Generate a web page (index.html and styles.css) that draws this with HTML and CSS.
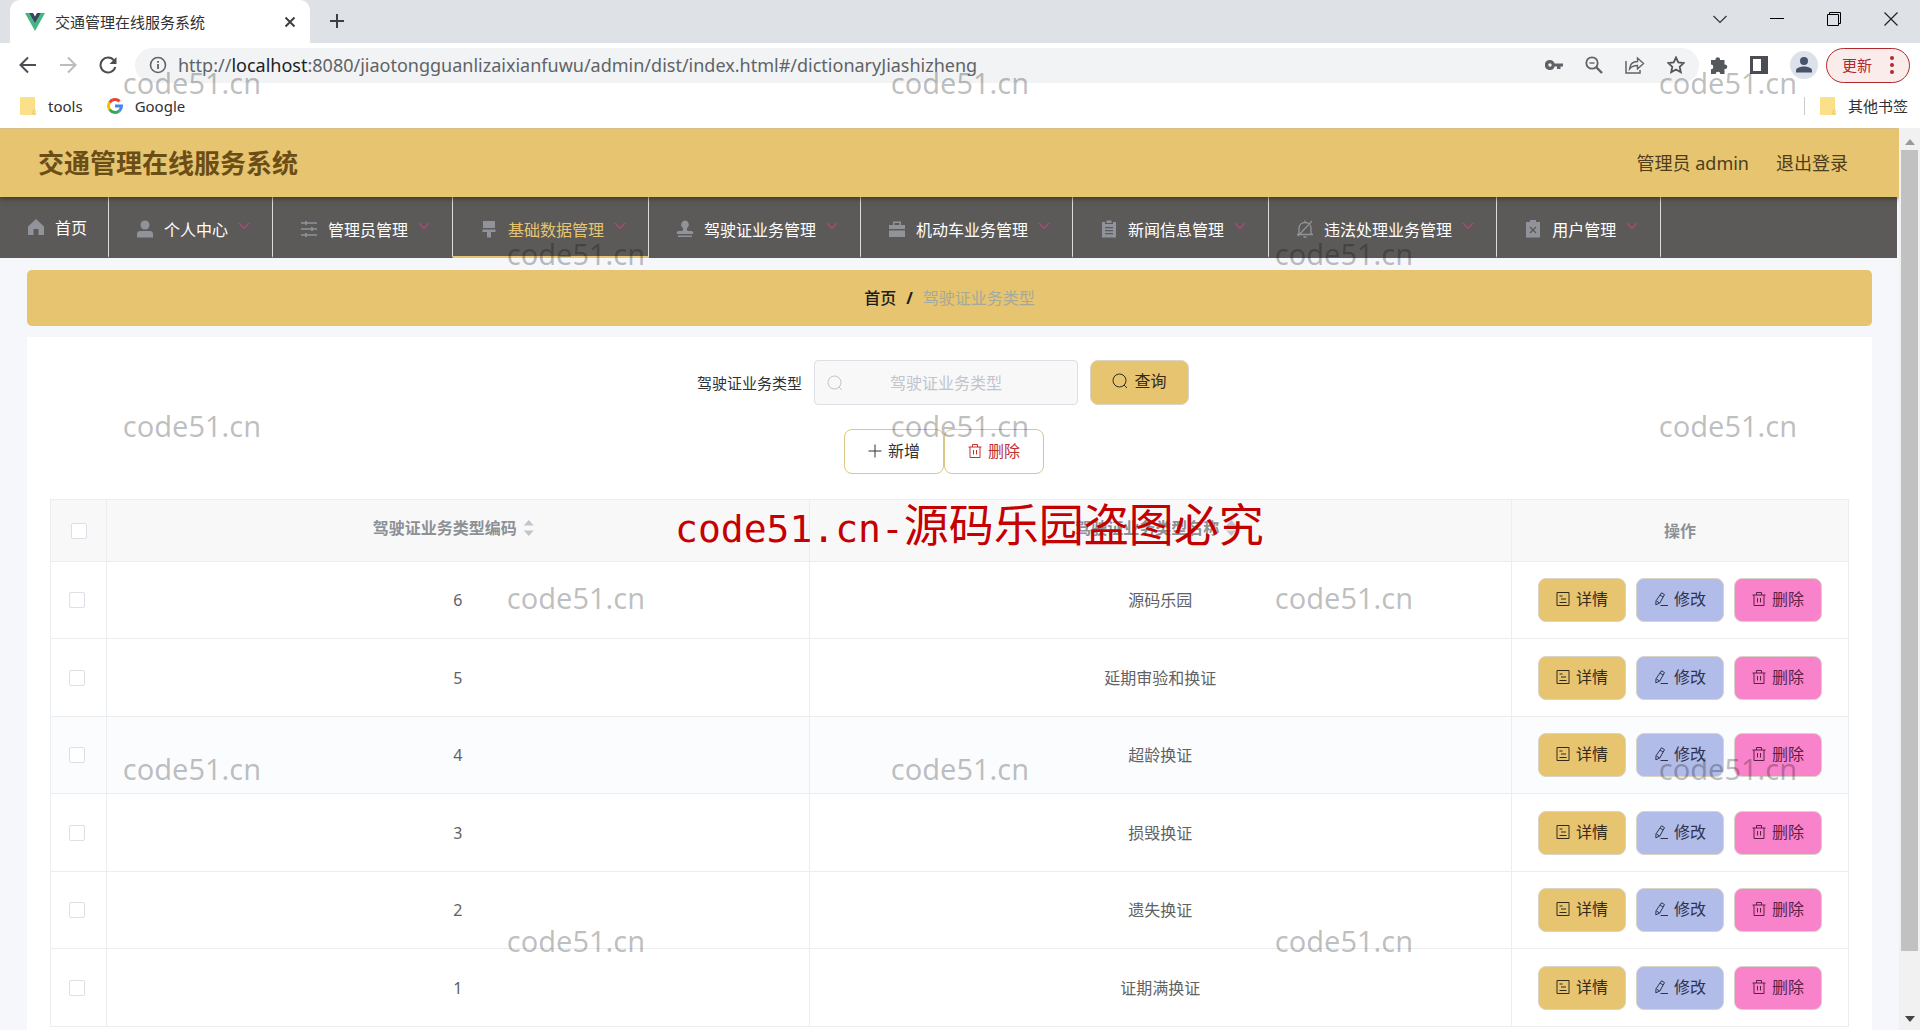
FILE: index.html
```html
<!DOCTYPE html>
<html lang="zh-CN">
<head>
<meta charset="utf-8">
<title>交通管理在线服务系统</title>
<link rel="stylesheet" href="styles.css">
</head>
<body>
<svg class="sprite" aria-hidden="true">
  <symbol id="i-doc" viewBox="0 0 14 14"><path d="M1 .5h12v13H1zM3.500 4h3M5 7h5M3.500 10.500h7" fill="none" stroke="currentColor"/></symbol>
  <symbol id="i-edit" viewBox="0 0 14 14"><path d="M7.500 .8l3 1.800L5.800 11 1.800 12.800 2 8.800zM6 3l3 2M2.500 9l3 2M6.500 13.500H14" fill="none" stroke="currentColor"/></symbol>
  <symbol id="i-trash" viewBox="0 0 14 14"><path d="M.5 3h13M4.500 3V.5h5V3M2 3v10.500h10V3M5.500 6v4.500M8.500 6v4.500" fill="none" stroke="currentColor"/></symbol>
  <symbol id="i-search" viewBox="0 0 16 16"><circle cx="7.500" cy="7.500" r="6.500" fill="none" stroke="currentColor"/><path d="M12 12l3 3" stroke="currentColor"/></symbol>
  <symbol id="i-plus" viewBox="0 0 14 14"><path d="M7 .5v13M.5 7h13" stroke="currentColor"/></symbol>
  <symbol id="i-down" viewBox="0 0 12 8"><path d="M1 1l5 5.500L11 1" fill="none" stroke="currentColor" stroke-width="1.400"/></symbol>
  <symbol id="i-folder" viewBox="0 0 16 18"><path d="M1 0h13a1 1 0 0 1 1 1v11l1 2v3a1 1 0 0 1-1 1H1a1 1 0 0 1-1-1V1a1 1 0 0 1 1-1z" fill="#fbe08a"/><path d="M15 12l-2 2v3h2.500" fill="none" stroke="#ecc65c"/></symbol>
</svg>

<div class="tabs">
  <div class="tab">
    <svg width="20" height="18" viewBox="0 0 20 18"><path d="M0 0h4l6 10.500L16 0h4L10 18z" fill="#41b883"/><path d="M4 0h4l2 3.500L12 0h4l-6 10.500z" fill="#34495e"/></svg>
    <span class="tab-title">交通管理在线服务系统</span>
    <button class="plain" aria-label="关闭标签"><svg width="12" height="12" viewBox="0 0 12 12"><path d="M1.500 1.500l9 9M10.500 1.500l-9 9" stroke="#3c4043" stroke-width="2"/></svg></button>
  </div>
  <button class="plain new-tab" aria-label="新标签页"><svg width="16" height="16" viewBox="0 0 16 16"><path d="M8 1v14M1 8h14" stroke="#3c4043" stroke-width="2"/></svg></button>
  <div class="window-controls">
    <button class="plain" aria-label="搜索标签页"><svg width="14" height="14" viewBox="0 0 14 14"><path d="M.5 4L7 10.500 13.500 4" fill="none" stroke="#333" stroke-width="1.200"/></svg></button>
    <button class="plain" aria-label="最小化"><svg width="14" height="14" viewBox="0 0 14 14"><path d="M0 6.500h14" stroke="#000"/></svg></button>
    <button class="plain" aria-label="还原"><svg width="14" height="14" viewBox="0 0 14 14"><path d="M.5 2.500h11v11H.5zM2.500 2V.5h11v11H12" fill="none" stroke="#000"/></svg></button>
    <button class="plain" aria-label="关闭"><svg width="14" height="14" viewBox="0 0 14 14"><path d="M.5.5l13 13M13.500.5l-13 13" stroke="#222" stroke-width="1.200"/></svg></button>
  </div>
</div>

<div class="toolbar">
  <div class="history">
    <button class="plain" aria-label="后退"><svg width="18" height="18" viewBox="0 0 18 18"><path d="M17 9H2M9 1.500L1.500 9 9 16.500" fill="none" stroke="#4a4d51" stroke-width="2"/></svg></button>
    <button class="plain" aria-label="前进"><svg width="18" height="18" viewBox="0 0 18 18"><path d="M1 9h15M9 1.500L16.500 9 9 16.500" fill="none" stroke="#babcbe" stroke-width="2"/></svg></button>
    <button class="plain" aria-label="刷新"><svg width="18" height="18" viewBox="0 0 18 18"><path d="M15 4.500A7.500 7.500 0 1 0 16.300 11" fill="none" stroke="#4a4d51" stroke-width="2"/><path d="M17.500 1v7h-7z" fill="#4a4d51"/></svg></button>
  </div>
  <div class="omnibox">
    <svg width="18" height="18" viewBox="0 0 18 18"><circle cx="9" cy="9" r="7.500" fill="none" stroke="#5f6368" stroke-width="1.600"/><path d="M9 8v5M9 5v1.800" stroke="#5f6368" stroke-width="1.800"/></svg>
    <span class="url">http://<span class="host">localhost</span>:8080/jiaotongguanlizaixianfuwu/admin/dist/index.html#/dictionaryJiashizheng</span>
    <div class="omni-icons">
      <svg width="18" height="18" viewBox="0 0 18 18"><path d="M5 4a5 5 0 1 0 4.600 6.500H12V13h3.500v-2.500H18v-3H9.600A5 5 0 0 0 5 4zm0 3.300a1.700 1.700 0 1 1 0 3.400 1.700 1.700 0 0 1 0-3.400z" fill="#5f6368"/></svg>
      <svg width="18" height="18" viewBox="0 0 18 18"><circle cx="7" cy="7" r="5.700" fill="none" stroke="#5f6368" stroke-width="1.800"/><path d="M4.500 7h5" stroke="#5f6368" stroke-width="1.400"/><path d="M11 11l6 6" stroke="#5f6368" stroke-width="2.400"/></svg>
      <svg width="20" height="18" viewBox="0 0 20 18"><path d="M1 5v12h14v-3" fill="none" stroke="#5f6368" stroke-width="1.500"/><path d="M4.500 13c.5-5 3-7.500 8-7.500V2l6 5.500-6 5.500V9.500c-4 0-6 1-8 3.500z" fill="none" stroke="#5f6368" stroke-width="1.400"/></svg>
      <svg width="18" height="18" viewBox="0 0 18 18"><path d="M9 1.500l2.300 5 5.400.6-4 3.700 1.100 5.400L9 13.500l-4.800 2.700 1.100-5.400-4-3.700 5.400-.6z" fill="none" stroke="#54585c" stroke-width="1.800"/></svg>
    </div>
  </div>
  <div class="actions">
    <svg width="18" height="18" viewBox="0 0 18 18"><path d="M1 4h4.500a2.300 2.300 0 1 1 4.500 0h4.500v4.500a2.300 2.300 0 1 1 0 4.500V18H10.300a2.300 2.300 0 0 0-4.600 0H1v-4.800a2.300 2.300 0 0 0 0-4.600z" fill="#54585c"/></svg>
    <svg width="18" height="18" viewBox="0 0 18 18"><path d="M0 0h18v18H0zM3 3v12h8V3z" fill="#4a4d51" fill-rule="evenodd"/></svg>
    <svg width="28" height="28" viewBox="0 0 28 28"><circle cx="14" cy="14" r="14" fill="#dde1e9"/><circle cx="14" cy="10" r="4" fill="#47536b"/><path d="M6 21.500v-2c0-3 5-4 8-4s8 1 8 4v2z" fill="#47536b"/></svg>
    <button class="update">更新<svg width="4" height="18" viewBox="0 0 4 18"><g fill="#b3282d"><circle cx="2" cy="2" r="2"/><circle cx="2" cy="9" r="2"/><circle cx="2" cy="16" r="2"/></g></svg></button>
  </div>
</div>

<div class="bookmarks">
  <a href="#"><svg width="16" height="18"><use href="#i-folder"/></svg>tools</a>
  <a href="#"><svg width="16" height="16" viewBox="0 0 16 16"><g fill="none" stroke-width="3"><path d="M2.600 4.500A6.500 6.500 0 0 1 12.600 3.400" stroke="#ea4335"/><path d="M2.600 11.500a6.500 6.500 0 0 1 0-7" stroke="#fbbc05"/><path d="M12.300 12.800A6.500 6.500 0 0 1 2.600 11.500" stroke="#34a853"/><path d="M8 8h6.500a6.500 6.500 0 0 1-2.200 4.800" stroke="#4285f4"/></g></svg>Google</a>
  <a href="#" class="other"><svg width="16" height="18"><use href="#i-folder"/></svg>其他书签</a>
</div>

<div class="viewport">
  <div class="app">
    <header class="header">
      <h1>交通管理在线服务系统</h1>
      <div class="account"><span>管理员 admin</span><a href="#">退出登录</a></div>
    </header>
    <nav class="nav">
      <a href="#" class="home"><svg width="18" height="18" viewBox="0 0 18 18"><path d="M9 1L1 8.500V17h5.500v-6h5v6H17V8.500z" fill="currentColor"/></svg>首页</a>
      <a href="#"><svg width="18" height="18" viewBox="0 0 18 18"><circle cx="9" cy="5" r="4.500" fill="currentColor"/><path d="M1 17.500V14c0-2 1.500-3 3-3h10c1.500 0 3 1 3 3v3.500z" fill="currentColor"/></svg>个人中心<svg class="down"><use href="#i-down"/></svg></a>
      <a href="#"><svg width="18" height="18" viewBox="0 0 18 18"><path d="M1 3h16M1 9h16M1 15h16M6 1v4M12 7v4M6 13v4" fill="none" stroke="currentColor" stroke-width="1.600"/></svg>管理员管理<svg class="down"><use href="#i-down"/></svg></a>
      <a href="#" class="active"><svg width="18" height="18" viewBox="0 0 18 18"><path d="M3 1h12v7H3zM2.500 9.500h13V12H11v5.500H7V12H2.500z" fill="currentColor"/></svg>基础数据管理<svg class="down"><use href="#i-down"/></svg></a>
      <a href="#"><svg width="18" height="18" viewBox="0 0 18 18"><path d="M9 .5a4 4 0 0 0-2.500 7c1 1 .8 3-.5 3.500H3a2 2 0 0 0-2 3h16a2 2 0 0 0-2-3h-3c-1.300-.5-1.500-2.500-.5-3.500A4 4 0 0 0 9 .5zM2 15.500h14v1.500H2z" fill="currentColor"/></svg>驾驶证业务管理<svg class="down"><use href="#i-down"/></svg></a>
      <a href="#"><svg width="18" height="18" viewBox="0 0 18 18"><path d="M5 5V1.500h8V5h4v4H1V5zm1.500 0h5V3h-5zM1 10.500h16V17H1z" fill="currentColor" fill-rule="evenodd"/></svg>机动车业务管理<svg class="down"><use href="#i-down"/></svg></a>
      <a href="#"><svg width="18" height="18" viewBox="0 0 18 18"><path d="M2 2h3v2h8V2h3v15.500H2zM6.500.5h5v2.500h-5zM5 7v1.300h8V7zM5 10v1.300h8V10zM5 13v1.300h8V13z" fill="currentColor" fill-rule="evenodd"/></svg>新闻信息管理<svg class="down"><use href="#i-down"/></svg></a>
      <a href="#"><svg width="18" height="18" viewBox="0 0 18 18"><path d="M3 14.500V8.500C3 5 5.500 2.500 9 2.500s6 2.500 6 6v6M1 14.500h16M9 .5v2M7.500 17h3M16 1L2 16" fill="none" stroke="currentColor" stroke-width="1.300"/></svg>违法处理业务管理<svg class="down"><use href="#i-down"/></svg></a>
      <a href="#"><svg width="18" height="18" viewBox="0 0 18 18"><path d="M2 2h14v15.500H2zM6 0h6v2H6z" fill="currentColor"/><path d="M6 7l6 6M12 7l-6 6" stroke="#5c5a58" stroke-width="1.400"/></svg>用户管理<svg class="down"><use href="#i-down"/></svg></a>
    </nav>
    <main class="main">
      <div class="crumbs"><a href="#">首页</a><span class="slash">/</span><span class="current">驾驶证业务类型</span></div>
      <section class="card">
        <form class="search">
          <label for="type">驾驶证业务类型</label>
          <div class="field"><svg width="16" height="16"><use href="#i-search"/></svg><input id="type" type="text" placeholder="驾驶证业务类型"></div>
          <button type="button" class="btn query"><svg width="16" height="16"><use href="#i-search"/></svg>查询</button>
        </form>
        <div class="batch">
          <button class="btn outline"><svg width="14" height="14"><use href="#i-plus"/></svg>新增</button>
          <button class="btn outline danger"><svg width="14" height="14"><use href="#i-trash"/></svg>删除</button>
        </div>
        <table>
          <colgroup><col class="c-check"><col><col><col class="c-ops"></colgroup>
          <thead><tr>
            <th><input type="checkbox" aria-label="全选"></th>
            <th><span class="sort">驾驶证业务类型编码<i></i></span></th>
            <th><span class="sort">驾驶证业务类型名称<i></i></span></th>
            <th>操作</th>
          </tr></thead>
          <tbody>
            <tr><td><input type="checkbox" aria-label="选择 6"></td><td>6</td><td>源码乐园</td><td><div class="ops"><button class="btn query"><svg><use href="#i-doc"/></svg>详情</button><button class="btn edit"><svg><use href="#i-edit"/></svg>修改</button><button class="btn remove"><svg><use href="#i-trash"/></svg>删除</button></div></td></tr>
            <tr><td><input type="checkbox" aria-label="选择 5"></td><td>5</td><td>延期审验和换证</td><td><div class="ops"><button class="btn query"><svg><use href="#i-doc"/></svg>详情</button><button class="btn edit"><svg><use href="#i-edit"/></svg>修改</button><button class="btn remove"><svg><use href="#i-trash"/></svg>删除</button></div></td></tr>
            <tr class="hover"><td><input type="checkbox" aria-label="选择 4"></td><td>4</td><td>超龄换证</td><td><div class="ops"><button class="btn query"><svg><use href="#i-doc"/></svg>详情</button><button class="btn edit"><svg><use href="#i-edit"/></svg>修改</button><button class="btn remove"><svg><use href="#i-trash"/></svg>删除</button></div></td></tr>
            <tr><td><input type="checkbox" aria-label="选择 3"></td><td>3</td><td>损毁换证</td><td><div class="ops"><button class="btn query"><svg><use href="#i-doc"/></svg>详情</button><button class="btn edit"><svg><use href="#i-edit"/></svg>修改</button><button class="btn remove"><svg><use href="#i-trash"/></svg>删除</button></div></td></tr>
            <tr><td><input type="checkbox" aria-label="选择 2"></td><td>2</td><td>遗失换证</td><td><div class="ops"><button class="btn query"><svg><use href="#i-doc"/></svg>详情</button><button class="btn edit"><svg><use href="#i-edit"/></svg>修改</button><button class="btn remove"><svg><use href="#i-trash"/></svg>删除</button></div></td></tr>
            <tr><td><input type="checkbox" aria-label="选择 1"></td><td>1</td><td>证期满换证</td><td><div class="ops"><button class="btn query"><svg><use href="#i-doc"/></svg>详情</button><button class="btn edit"><svg><use href="#i-edit"/></svg>修改</button><button class="btn remove"><svg><use href="#i-trash"/></svg>删除</button></div></td></tr>
          </tbody>
        </table>
      </section>
    </main>
  </div>
  <div class="scrollbar">
    <svg width="10" height="6" viewBox="0 0 10 6"><path d="M5 0l5 6H0z" fill="#9a9a9a"/></svg>
    <div class="track"><div class="thumb"></div></div>
    <svg width="10" height="6" viewBox="0 0 10 6"><path d="M0 0h10L5 6z" fill="#444"/></svg>
  </div>
</div>

<div class="marks">
  <span>code51.cn</span><span>code51.cn</span><span>code51.cn</span>
  <span>code51.cn</span><span>code51.cn</span>
  <span>code51.cn</span><span>code51.cn</span><span>code51.cn</span>
  <span>code51.cn</span><span>code51.cn</span>
  <span>code51.cn</span><span>code51.cn</span><span>code51.cn</span>
  <span>code51.cn</span><span>code51.cn</span>
</div>
<div class="notice"><span class="latin">code51.cn-</span>源码乐园盗图必究</div>
</body>
</html>
```
FILE: styles.css
```css
* { box-sizing: border-box; }

body {
  margin: 0;
  height: 100vh;
  overflow: hidden;
  position: relative;
  display: flex;
  flex-direction: column;
  background: #fff;
  color: #303133;
  font: 16px/24px "Noto Sans", "Noto Sans CJK SC", sans-serif;
}

a { color: inherit; text-decoration: none; }
svg { display: block; flex: none; }
button, input { font: inherit; color: inherit; }
.sprite { position: absolute; width: 0; height: 0; }

.plain {
  display: flex;
  padding: 0;
  border: 0;
  background: none;
}

/* Browser chrome */
.tabs {
  display: flex;
  height: 43px;
  padding-left: 10px;
  background: #dee1e6;
}
.tab {
  display: flex;
  align-items: center;
  width: 300px;
  padding: 0 14px 0 15px;
  background: #fff;
  border-radius: 10px 10px 0 0;
}
.tab-title { flex: 1; margin-left: 10px; font-size: 15px; }
.new-tab { margin: 13px 0 0 19px; }
.window-controls {
  display: flex;
  gap: 43px;
  margin-left: auto;
  padding: 12px 22px 0 0;
}

.toolbar {
  display: flex;
  align-items: center;
  height: 44px;
  padding-right: 10px;
}
.history { display: flex; gap: 22px; width: 135px; padding-left: 19px; }
.omnibox {
  display: flex;
  flex: 1;
  align-items: center;
  height: 35px;
  padding: 0 14px;
  background: #f1f3f4;
  border-radius: 18px;
}
.url { flex: 1; margin-left: 11px; font-size: 18px; color: #5f6368; }
.host { color: #202124; }
.omni-icons { display: flex; gap: 22px; }
.actions { display: flex; align-items: center; gap: 22px; margin-left: 17px; }
.update {
  display: flex;
  align-items: center;
  justify-content: space-between;
  width: 84px;
  height: 35px;
  margin-left: -14px;
  padding: 0 15px;
  border: 1px solid #b3282d;
  border-radius: 18px;
  background: #fbecec;
  color: #b3282d;
  font-size: 15px;
}
.toolbar .omnibox { margin-right: -6px; }

.bookmarks {
  display: flex;
  gap: 24px;
  align-items: center;
  height: 41px;
  padding: 0 12px 4px 20px;
  font-size: 15px;
}
.bookmarks a { display: flex; align-items: center; gap: 12px; }
.bookmarks .other {
  margin-left: auto;
  padding-left: 15px;
  border-left: 1px solid #c8cacd;
  line-height: 18px;
}

/* Page */
.viewport { display: flex; flex: 1; min-height: 0; }
.app {
  flex: 1;
  overflow: hidden;
  background: #f5f7fa;
}
.header {
  position: relative;
  display: flex;
  align-items: center;
  justify-content: space-between;
  height: 69px;
  padding: 0 51px 0 38px;
  border-top: 1px solid #d8c08a;
  background: #e7c46f;
  box-shadow: 0 1px 6px rgba(40, 30, 0, .7);
}
.header h1 { margin: 0; font-size: 26px; line-height: 36px; color: #6b4e16; }
.account { display: flex; gap: 27px; font-size: 18px; color: #4d3d1c; }

.nav {
  display: flex;
  height: 61px;
  margin-right: 2px;
  background: #5c5a58;
  color: #fff;
}
.nav a {
  display: flex;
  align-items: center;
  padding: 6px 22px 0 27px;
  border-right: 1px solid #dcdcdc;
  border-bottom: 2px solid transparent;
}
.nav svg { margin: -2px 10px 0 0; color: #909399; }
.nav .home { padding: 2px 21px 0 27px; }
.nav .down { width: 12px; height: 8px; margin: -8px 0 0 10px; color: #a84a76; }
.nav .active { color: #e7c46f; border-bottom-color: #e7c46f; }

.main { padding: 12px 27px 0; }
.crumbs {
  display: flex;
  align-items: center;
  justify-content: center;
  gap: 10px;
  height: 56px;
  margin-bottom: 11px;
  border-radius: 5px;
  background: #e7c46f;
}
.crumbs a, .slash { font-weight: 500; color: #1c1c1c; }
.slash { font-weight: 700; }
.current { color: #a5a99b; }

.card { padding: 23px 23px 40px; background: #fff; }
.search { display: flex; justify-content: center; align-items: center; padding-right: 13px; }
.search label { margin-right: 12px; font-size: 15px; }
.field {
  display: flex;
  align-items: center;
  width: 264px;
  height: 45px;
  margin-right: 12px;
  padding: 0 12px;
  border: 1px solid #dcdfe6;
  border-radius: 4px;
  background: #f8f8f9;
  color: #c0c4cc;
}
.field input {
  flex: 1;
  min-width: 0;
  padding: 0 16px 0 0;
  border: 0;
  background: none;
  text-align: center;
}
.field input::placeholder { color: #c0c4cc; }

.btn {
  display: flex;
  align-items: center;
  justify-content: center;
  gap: 6px;
  width: 88px;
  height: 44px;
  padding: 0 0 2px;
  border: 1px solid #d9d4c8;
  border-radius: 8px;
  color: #332b1c;
}
.btn svg { width: 14px; height: 14px; }
.query { background: #e7c46f; }
.search .btn { width: 99px; height: 45px; padding-bottom: 4px; }
.search .btn svg { width: 16px; height: 16px; }
.edit { background: #b1bce9; color: #2f3350; }
.remove { background: #f983cb; color: #5c1f45; }
.outline { width: 100px; height: 45px; border-color: #dcc585; background: #fff; color: #333; }
.danger { color: #c03030; }

.batch { display: flex; justify-content: center; margin: 24px 0 25px; padding-right: 11px; }

table {
  width: 100%;
  table-layout: fixed;
  border-collapse: collapse;
  color: #606266;
}
.c-check { width: 56px; }
.c-ops { width: 337px; }
th, td { padding: 0; border: 1px solid #ebeef0; text-align: center; }
th { height: 62px; background: #f8f8f9; color: #8d9096; font-weight: 700; }
td { height: 77px; }
tr:nth-child(even) td { height: 78px; }
.hover { background: #fbfcfe; }
td:first-child { padding-right: 4px; }
input[type="checkbox"] {
  display: block;
  appearance: none;
  width: 16px;
  height: 16px;
  margin: 0 auto;
  border: 1px solid #dcdfe6;
  border-radius: 2px;
  background: #fff;
}
.sort { display: inline-flex; align-items: center; padding-bottom: 5px; }
.sort i {
  width: 10px;
  height: 16px;
  margin: 0 9px 0 7px;
  background: #c0c4cc;
  clip-path: polygon(50% 0, 100% 35%, 0 35%, 0 65%, 100% 65%, 50% 100%, 0 65%, 0 35%);
}
.ops { display: flex; justify-content: center; gap: 10px; }

.scrollbar {
  display: flex;
  flex-direction: column;
  align-items: center;
  width: 21px;
  padding: 11px 0 8px;
  background: #f1f1f1;
}
.track { flex: 1; margin: 5px 0; }
.thumb { width: 17px; height: 93%; background: #c1c1c1; }

/* Watermark layer */
.marks {
  position: absolute;
  inset: -3px 0 3px;
  display: grid;
  grid-template: repeat(6, 1fr) / repeat(5, 1fr);
  place-items: center;
  pointer-events: none;
  color: rgba(0, 0, 0, .26);
  font-size: 29px;
}
.marks span:nth-child(5n+1) { grid-column: 1; }
.marks span:nth-child(5n+2) { grid-column: 3; }
.marks span:nth-child(5n+3) { grid-column: 5; }
.marks span:nth-child(5n+4) { grid-column: 2; }
.marks span:nth-child(5n) { grid-column: 4; }
.notice {
  position: absolute;
  top: 48%;
  left: 35%;
  padding-left: 3px;
  color: #c40000;
  font-size: 45px;
  line-height: 62px;
  white-space: nowrap;
  pointer-events: none;
}
.latin { font-family: "DejaVu Sans Mono", monospace; font-size: 38px; }
```
